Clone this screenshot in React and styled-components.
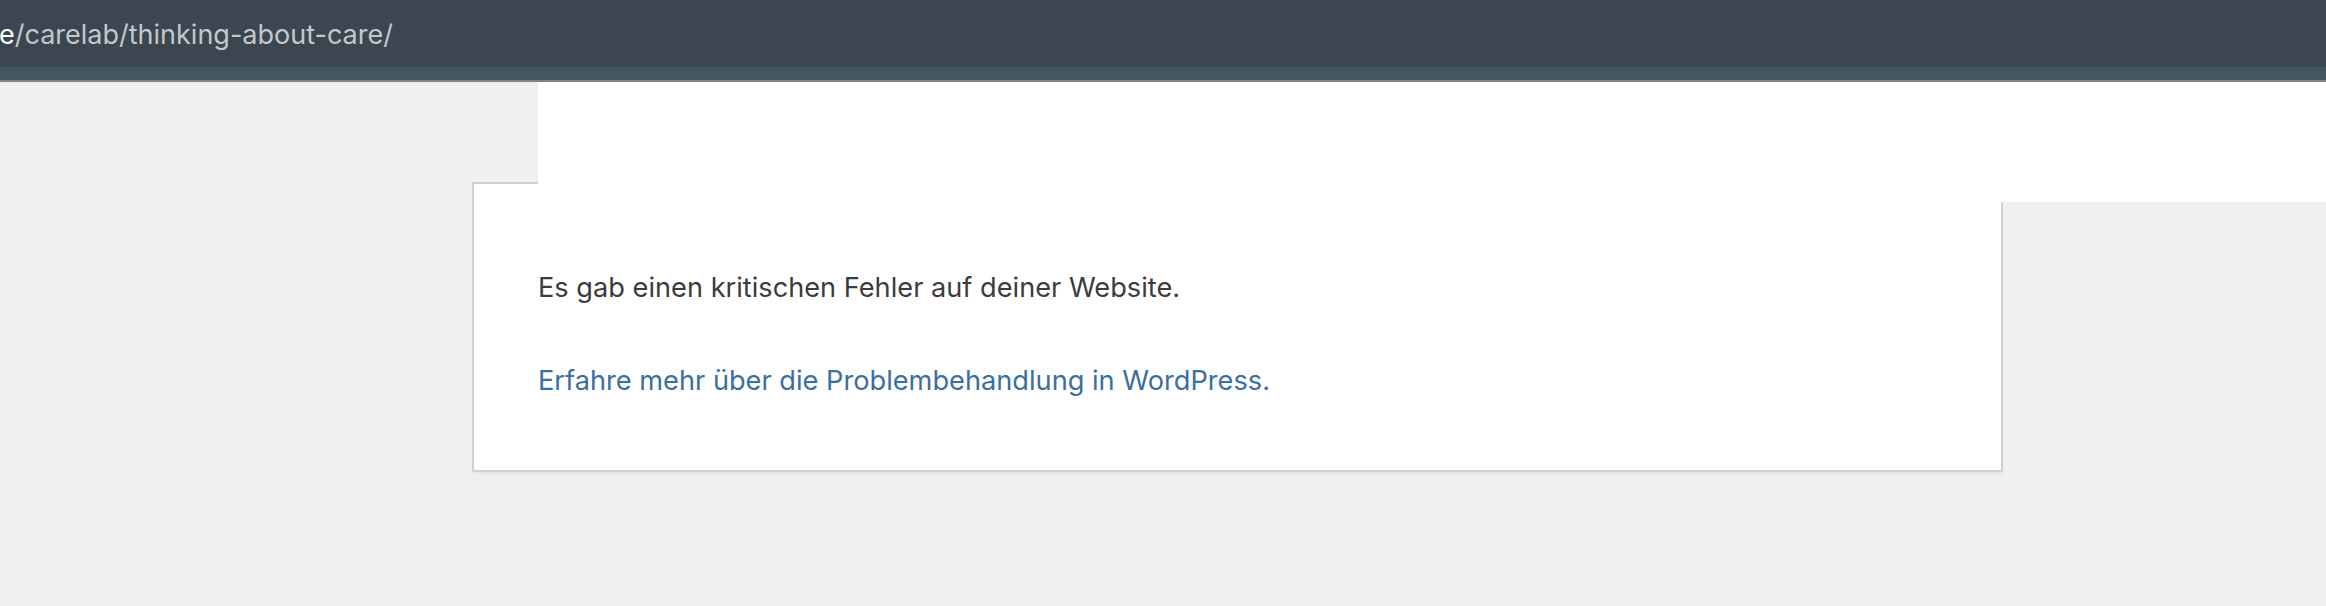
import styled, { createGlobalStyle } from "styled-components";

const GlobalStyle = createGlobalStyle`
  html, body {
    margin: 0;
    padding: 0;
    background: #f0f0f0;
    height: 100%;
  }
  body {
    font-family: Inter, "Noto Sans", sans-serif;
    overflow: hidden;
  }
`;

const Page = styled.div`
  width: 2326px;
  height: 606px;
  background: #f0f0f0;
`;

const UrlBar = styled.div`
  height: 67px;
  background: #3b4650;
  display: flex;
  align-items: center;
  overflow: hidden;
  white-space: nowrap;
`;

const UrlText = styled.div`
  margin-left: -1px;
  padding-top: 2px;
  font-size: 27px;
  color: #c3c7cb;
`;

const Domain = styled.span`
  color: #ffffff;
`;

const AdminStrip = styled.div`
  height: 13px;
  background: #44565e;
  border-bottom: 2px solid #7b878d;
`;

const Main = styled.main`
  position: relative;
  padding: 100px 0 0 472px;
`;

// white header block of the theme, painted over the error card
const HeaderBlock = styled.div`
  position: absolute;
  top: 0;
  left: 538px;
  right: 0;
  height: 120px;
  background: #ffffff;
  z-index: 2;
`;

const ErrorCard = styled.div`
  box-sizing: border-box;
  width: 1531px;
  height: 290px;
  background: #ffffff;
  border: 2px solid #cfd0d0;
  box-shadow: 0 2px 2px rgba(0, 0, 0, 0.04);
  padding: 84px 0 0 64px;
`;

const Message = styled.p`
  margin: 0 0 ${(p) => p.$gap || 0}px;
  font-size: 27.2px;
  line-height: 40px;
  color: ${(p) => (p.$link ? "#3a6f9f" : "#3c3c3c")};
`;

const Link = styled.a`
  color: inherit;
  text-decoration: none;
`;

export default function App() {
  return (
    <Page>
      <GlobalStyle />
      <UrlBar>
        <UrlText>
          <Domain>e</Domain>/carelab/thinking-about-care/
        </UrlText>
      </UrlBar>
      <AdminStrip />
      <Main>
        <HeaderBlock />
        <ErrorCard>
          <Message $gap={53}>
            Es gab einen kritischen Fehler auf deiner Website.
          </Message>
          <Message $link>
            <Link href="#">
              Erfahre mehr über die Problembehandlung in WordPress.
            </Link>
          </Message>
        </ErrorCard>
      </Main>
    </Page>
  );
}
